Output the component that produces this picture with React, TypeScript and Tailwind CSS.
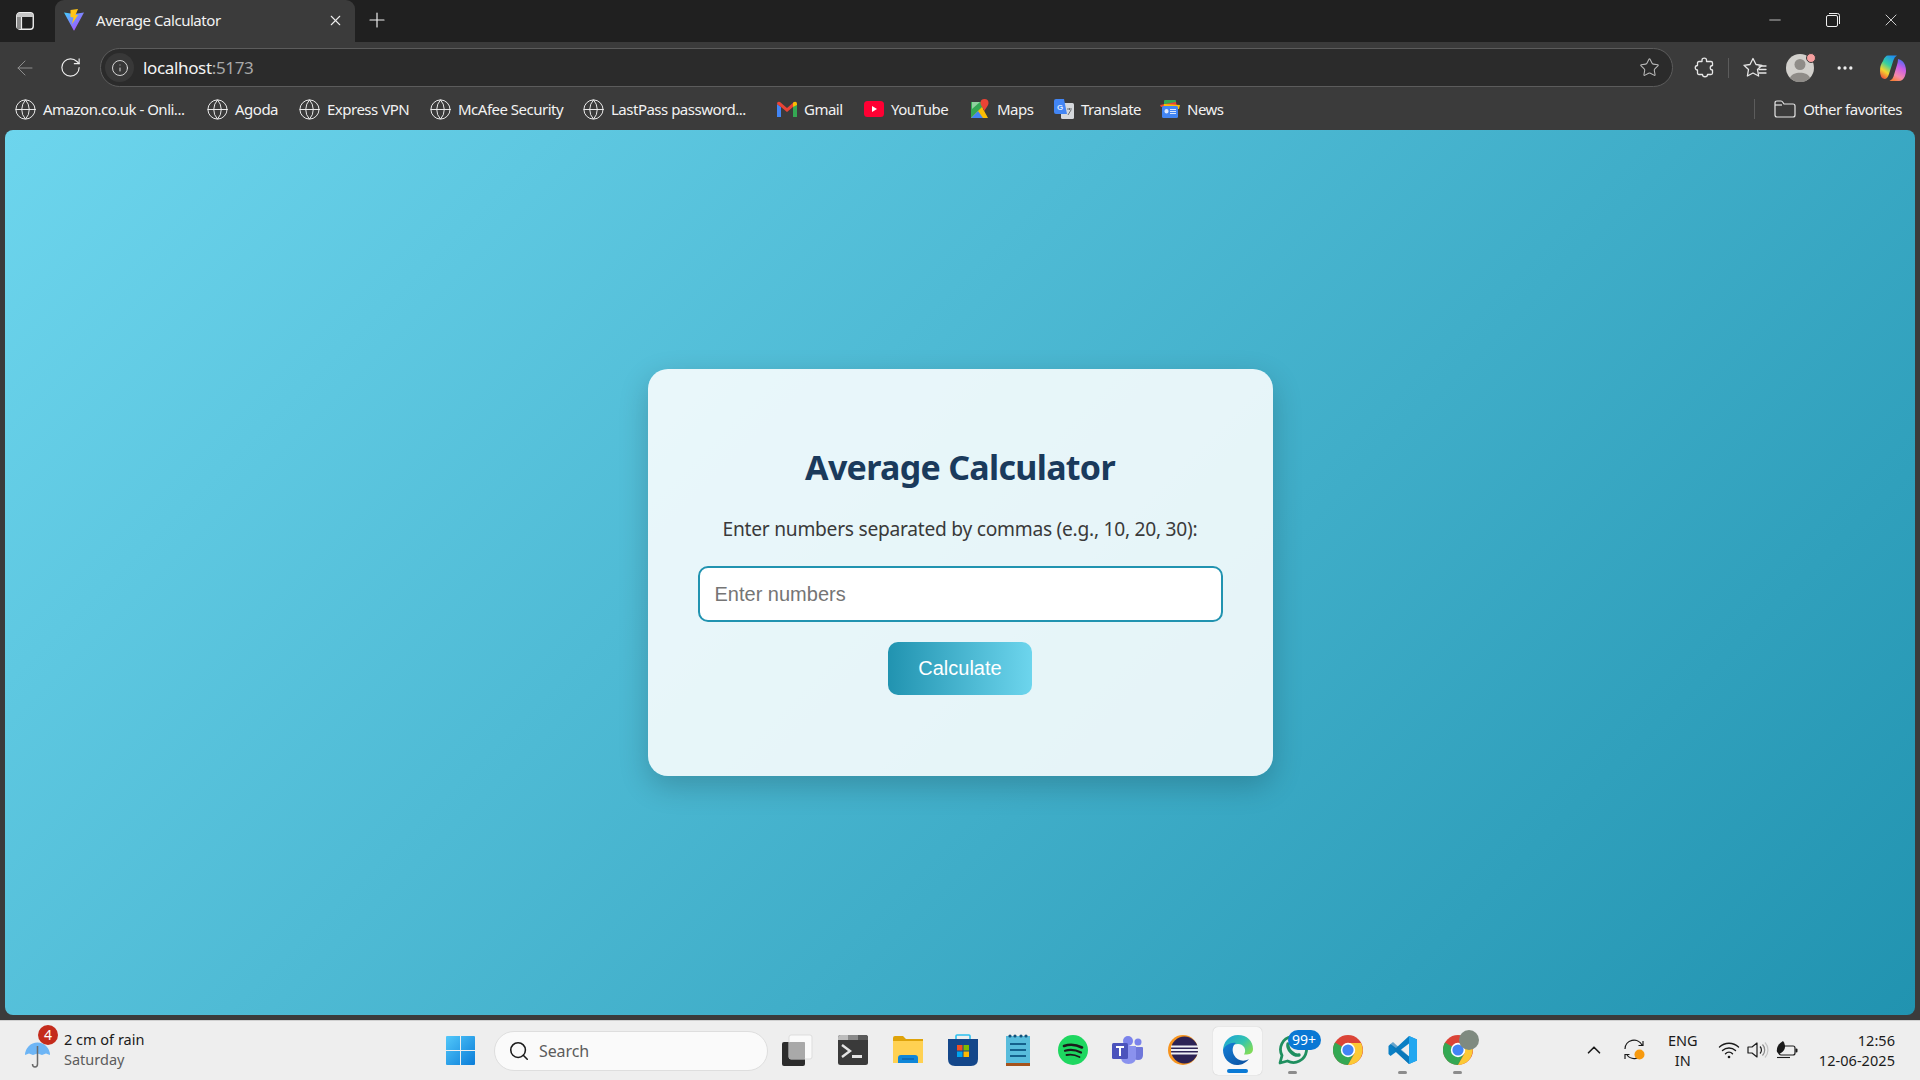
import React from 'react';
import {
  ArrowLeft,
  ChevronUp,
  Ellipsis,
  Globe,
  Info,
  Minus,
  Plus,
  RotateCw,
  Search,
  Star,
  X,
} from 'lucide-react';

// Logos and small product marks
const ViteLogo = () => (
  <svg width="20" height="22" viewBox="0 0 20 22">
    <defs>
      <linearGradient id="viteBody" x1="0" y1="0" x2="1" y2="1">
        <stop offset="0" stopColor="#41d1ff" />
        <stop offset="1" stopColor="#bd34fe" />
      </linearGradient>
    </defs>
    <path d="M0 3.5 L10 5 L20 3.5 L10.5 21 Q10 22 9.5 21 Z" fill="url(#viteBody)" />
    <path d="M6.5 1 L14 0 L11.5 6 L14 6 L8 15 L9.5 8.5 L6.5 8 Z" fill="#ffc517" />
  </svg>
);

const SidebarIcon = () => (
  <svg width="18" height="18" viewBox="0 0 18 18">
    <rect x="0.75" y="0.75" width="16.5" height="16.5" rx="3" fill="none" stroke="#eeeeee" strokeWidth="1.4" />
    <path d="M1 4 Q1 1 4 1 H14 Q17 1 17 4 V5 H1 Z" fill="#c8c8c8" />
    <rect x="1" y="5" width="4.5" height="12" fill="#8a8a8a" />
    <path d="M5.5 5 V17" stroke="#eeeeee" strokeWidth="1.2" />
  </svg>
);

const GmailLogo = () => (
  <svg width="20" height="16" viewBox="0 0 20 16">
    <path d="M0 3 L0 16 L4 16 L4 6 Z" fill="#4285f4" />
    <path d="M20 3 L20 16 L16 16 L16 6 Z" fill="#34a853" />
    <path d="M0 3 Q0 0 3 1 L10 7 L17 1 L16 6 L10 11 L4 6 Z" fill="#ea4335" />
    <path d="M16 1.8 L17 1 Q20 0 20 3 L20 4 L16 6 Z" fill="#fbbc04" />
  </svg>
);

const YoutubeLogo = () => (
  <svg width="20" height="16" viewBox="0 0 20 16">
    <rect width="20" height="16" rx="3.5" fill="#ff0033" />
    <path d="M8 5 L13 8 L8 11 Z" fill="#fff" />
  </svg>
);

const MapsLogo = () => (
  <svg width="18" height="20" viewBox="0 0 18 20">
    <path d="M0 3 H12 V19 H0 Z" fill="#34a853" />
    <path d="M0 19 L11 8 L17 19 Z" fill="#fbbc04" />
    <path d="M0 19 L7 12 L12 19 Z" fill="#4285f4" />
    <path d="M1 3 H9 L1 10 Z" fill="#8fd19e" />
    <path d="M13.5 0 A4 4 0 0 1 17.5 4 C17.5 7 14.5 9 13.5 12 C12.5 9 9.5 7 9.5 4 A4 4 0 0 1 13.5 0 Z" fill="#ea4335" />
  </svg>
);

const TranslateLogo = () => (
  <svg width="20" height="20" viewBox="0 0 20 20">
    <rect x="7" y="4" width="13" height="16" rx="1.5" fill="#d5d8dc" />
    <path d="M13 10 H18 M15.5 9 V11 M14 16 L17 11" stroke="#6a6e73" strokeWidth="1" fill="none" />
    <path d="M2 0 H10 L13 15 H2 Q0 15 0 13 V2 Q0 0 2 0 Z" fill="#4285f4" />
    <text x="6" y="10.5" fontSize="8" fontWeight="700" textAnchor="middle" fill="#dce8fd" fontFamily="Liberation Sans, sans-serif">G</text>
  </svg>
);

const NewsLogo = () => (
  <svg width="20" height="20" viewBox="0 0 20 20">
    <rect x="4" y="1" width="12" height="8" rx="1" fill="#34a853" />
    <path d="M0 6 L16 3 L17 8 H1 Z" fill="#ea4335" />
    <path d="M4 5 L20 6 L19 10 H3 Z" fill="#fbbc04" />
    <rect x="2" y="7" width="16" height="12" rx="1.5" fill="#4285f4" />
    <rect x="4.5" y="10" width="4" height="4.5" rx="2" fill="#dce8fd" />
    <path d="M10 10.5 H16 M10 12.5 H16 M10 14.5 H16" stroke="#dce8fd" strokeWidth="1.2" />
  </svg>
);

const ExtensionIcon = () => (
  <svg width="20" height="21" viewBox="0 0 20 21" fill="none" stroke="#e6e6e6" strokeWidth="1.3" strokeLinejoin="round">
    <path d="M8 3 C8 0.5 12.5 0.5 12.5 3 L12.5 4.5 L17 4.5 Q18.5 4.5 18.5 6 L18.5 8.5 C15.5 8.5 15.5 13 18.5 13 L18.5 16 Q18.5 17.5 17 17.5 L13.5 17.5 C13.5 20.5 8.5 20.5 8.5 17.5 L5 17.5 Q3.5 17.5 3.5 16 L3.5 13 C0.5 13 0.5 8.5 3.5 8.5 L3.5 6 Q3.5 4.5 5 4.5 L8 4.5 Z" />
  </svg>
);

const FavoritesIcon = () => (
  <svg width="26" height="22" viewBox="0 0 26 22" fill="none" stroke="#e6e6e6" strokeWidth="1.3" strokeLinejoin="round">
    <path d="M11 1.5 L14 7.5 L20 8.3 L15.5 12.5 L16.6 19 L11 16 L5.4 19 L6.5 12.5 L2 8.3 L8 7.5 Z" />
    <path d="M17 9 H24 M17 12.5 H24 M17 16 H24" strokeLinecap="round" />
  </svg>
);

const Avatar = () => (
  <div className="relative w-[28px] h-[28px]">
    <svg width="28" height="28" viewBox="0 0 28 28">
      <circle cx="14" cy="14" r="14" fill="#d2d0cc" />
      <circle cx="14" cy="10.5" r="5.5" fill="#8f8c88" />
      <path d="M4 24 C6 17 22 17 24 24 A14 14 0 0 1 4 24 Z" fill="#8f8c88" />
    </svg>
    <span className="absolute -top-[1px] -right-[2px] w-[10px] h-[10px] rounded-full bg-[#f7a0a0] border border-[#3b3b3b]" />
  </div>
);

const CopilotLogo = () => (
  <svg width="28" height="28" viewBox="0 0 28 28">
    <defs>
      <linearGradient id="copA" x1="0.7" y1="0" x2="0.2" y2="1">
        <stop offset="0" stopColor="#1f8ff0" />
        <stop offset="0.4" stopColor="#35d0a0" />
        <stop offset="0.7" stopColor="#f5d52e" />
        <stop offset="1" stopColor="#f0503c" />
      </linearGradient>
      <linearGradient id="copB" x1="0.7" y1="0" x2="0.3" y2="1">
        <stop offset="0" stopColor="#4a6cf0" />
        <stop offset="0.35" stopColor="#c95ce8" />
        <stop offset="0.75" stopColor="#f48aa8" />
        <stop offset="1" stopColor="#f7803c" />
      </linearGradient>
    </defs>
    <path d="M9 1.5 H18 Q15.5 2.5 14.5 6 L10 20 Q8.5 25 5.5 25 Q1 24 1 17 Q1 11 4 7 Q6 1.5 9 1.5 Z" fill="url(#copA)" />
    <path d="M19 5 Q24 6 26 11 Q28 17 26 22 Q24 27 20 27 H10.5 Q13.5 26 14.5 22.5 L18 11 Q19 8 19 5 Z" fill="url(#copB)" />
  </svg>
);

const FolderOutline = () => (
  <svg width="22" height="20" viewBox="0 0 22 20" fill="none" stroke="#e6e6e6" strokeWidth="1.2">
    <path d="M1 4 Q1 2 3 2 H7 Q8 2 9 3.5 L10 5 H19 Q21 5 21 7 V16 Q21 18 19 18 H3 Q1 18 1 16 Z" />
    <path d="M1 6 H8" />
  </svg>
);

const WindowsLogo = () => (
  <svg width="29" height="29" viewBox="0 0 29 29">
    <defs>
      <linearGradient id="winA" x1="0" y1="0" x2="1" y2="1">
        <stop offset="0" stopColor="#52c8fa" />
        <stop offset="1" stopColor="#0a7cd8" />
      </linearGradient>
    </defs>
    <path d="M0 1 Q0 0 1 0 H14 V14 H0 Z M15 0 H28 Q29 0 29 1 V14 H15 Z M0 15 H14 V29 H1 Q0 29 0 28 Z M15 15 H29 V28 Q29 29 28 29 H15 Z" fill="url(#winA)" />
  </svg>
);

const TaskViewIcon = () => (
  <svg width="32" height="32" viewBox="0 0 32 32">
    <rect x="0" y="8" width="23" height="24" rx="2" fill="#2c2c2c" />
    <rect x="7" y="1" width="23" height="24" rx="2" fill="#ffffff" fillOpacity="0.72" stroke="#dddddd" />
    <rect x="7" y="8" width="16" height="17" rx="1" fill="#a9a9a9" />
  </svg>
);

const TerminalIcon = () => (
  <svg width="30" height="30" viewBox="0 0 30 30">
    <rect width="30" height="30" y="0" rx="2.5" fill="#3a3a3a" />
    <path d="M0 2.5 Q0 0 2.5 0 H10 V5 H0 Z" fill="#bdbdbd" />
    <rect x="10" y="0" width="10" height="5" fill="#8a8a8a" />
    <path d="M20 0 H27.5 Q30 0 30 2.5 V5 H20 Z" fill="#5a5a5a" />
    <path d="M4 10 L12 16 L4 22" fill="none" stroke="#e4e4e4" strokeWidth="2.4" />
    <rect x="14" y="20" width="10" height="3" fill="#e4e4e4" />
  </svg>
);

const ExplorerIcon = () => (
  <svg width="30" height="28" viewBox="0 0 30 28">
    <path d="M0 2 Q0 0 2 0 H10 L13 3 H30 V8 H0 Z" fill="#dfa30a" />
    <path d="M0 5 H30 V27 H0 Z" fill="#ffd152" />
    <path d="M5 22 Q5 19 8 19 H22 Q25 19 25 22 V27 H5 Z" fill="#0f86d8" />
    <path d="M9 23 H21" stroke="#0b5ca3" strokeWidth="1.2" />
  </svg>
);

const StoreIcon = () => (
  <svg width="30" height="32" viewBox="0 0 30 32">
    <path d="M8 6 V2 Q8 1 9 1 H21 Q22 1 22 2 V6" fill="none" stroke="#2bc0f0" strokeWidth="1.6" />
    <path d="M0 5 H30 V25 Q30 32 23 32 H7 Q0 32 0 25 Z" fill="#14478a" />
    <rect x="9" y="11" width="5.5" height="5.5" fill="#f25022" />
    <rect x="15.5" y="11" width="5.5" height="5.5" fill="#7fba00" />
    <rect x="9" y="17.5" width="5.5" height="5.5" fill="#00a4ef" />
    <rect x="15.5" y="17.5" width="5.5" height="5.5" fill="#ffb900" />
  </svg>
);

const NotepadIcon = () => (
  <svg width="24" height="32" viewBox="0 0 24 32">
    <rect y="2" width="24" height="27" fill="#58bcdc" />
    <rect y="29" width="24" height="3" fill="#a5531c" />
    <circle cx="4" cy="2" r="1.6" fill="#14527a" />
    <circle cx="9" cy="2" r="1.6" fill="#14527a" />
    <circle cx="15" cy="2" r="1.6" fill="#14527a" />
    <circle cx="20" cy="2" r="1.6" fill="#14527a" />
    <path d="M4 10 H20 M4 16 H20 M4 22 H20" stroke="#14608c" strokeWidth="2" />
  </svg>
);

const SpotifyIcon = () => (
  <svg width="30" height="30" viewBox="0 0 30 30" fill="none" stroke="#1b1b1b" strokeLinecap="round">
    <circle cx="15" cy="15" r="15" fill="#1ed760" stroke="none" />
    <path d="M6 11 Q15 8 24 12.5" strokeWidth="2.6" />
    <path d="M7 15.8 Q15 13.5 23 17.5" strokeWidth="2.2" />
    <path d="M8.5 20 Q15 18.5 21.5 22" strokeWidth="1.8" />
  </svg>
);

const TeamsIcon = () => (
  <svg width="31" height="28" viewBox="0 0 31 28">
    <circle cx="26" cy="6" r="3.5" fill="#7b83eb" />
    <path d="M21 11 H30 Q31 11 31 12 V19 Q31 24 26 24 Q21 24 21 19 Z" fill="#6f77da" />
    <circle cx="16" cy="5" r="5" fill="#7b83eb" />
    <path d="M9 10 H24 V21 Q24 28 16.5 28 Q9 28 9 21 Z" fill="#8a92ee" />
    <rect x="0" y="7" width="16" height="16" rx="1.5" fill="#4b53bc" />
    <path d="M4 11 H12 M8 11 V20" stroke="#fff" strokeWidth="2" />
  </svg>
);

const EclipseIcon = () => (
  <svg width="30" height="30" viewBox="0 0 30 30">
    <circle cx="15" cy="15" r="15" fill="#f7941e" />
    <circle cx="16.5" cy="15" r="13.5" fill="#2c2255" />
    <rect x="3" y="10.5" width="27" height="2" fill="#efeff5" />
    <rect x="3" y="14" width="27" height="2" fill="#efeff5" />
    <rect x="3" y="17.5" width="27" height="2" fill="#efeff5" />
  </svg>
);

const EdgeIcon = () => (
  <svg width="30" height="30" viewBox="0 0 30 30">
    <defs>
      <linearGradient id="edgeTop" x1="0" y1="0" x2="1" y2="0.7">
        <stop offset="0" stopColor="#1a9fdc" />
        <stop offset="0.6" stopColor="#33c4b0" />
        <stop offset="1" stopColor="#7fdb5a" />
      </linearGradient>
      <linearGradient id="edgeLow" x1="0" y1="0" x2="1" y2="1">
        <stop offset="0" stopColor="#1580d8" />
        <stop offset="1" stopColor="#0b4f9e" />
      </linearGradient>
    </defs>
    <path d="M15 0 C24 0 30 6 30 14 C30 19 25 20 21 19.5 C24 15 21 9 15 9 C9 9 3 12 0 16 C0 7 6 0 15 0 Z" fill="url(#edgeTop)" />
    <path d="M0 15 C2 10 8 7 13 8 C9 11 9 16 11 20 C14 26 21 27 26 24 C22 29 17 30 14 30 C6 30 0 23 0 15 Z" fill="url(#edgeLow)" />
  </svg>
);

const WhatsAppIcon = () => (
  <svg width="30" height="30" viewBox="0 0 30 30" fill="none" stroke="#1f8f5f" strokeWidth="2.8">
    <path d="M2 28 L4 20.5 A13 13 0 1 1 9.5 26 Z" strokeLinejoin="round" />
    <path d="M10 9 C9 14 15 21 21 20" strokeWidth="3.4" strokeLinecap="round" />
  </svg>
);

const ChromeIcon = ({ size = 30 }: { size?: number }) => (
  <svg width={size} height={size} viewBox="0 0 30 30">
    <circle cx="15" cy="15" r="15" fill="#db4437" />
    <path d="M15 15 L2 7.5 A15 15 0 0 0 15 30 L21.5 18 Z" fill="#34a853" />
    <path d="M15 8 H28 A15 15 0 0 1 15 30 L21.5 18.5 Z" fill="#fcc934" />
    <circle cx="15" cy="15" r="7.2" fill="#fff" />
    <circle cx="15" cy="15" r="5.6" fill="#4285f4" />
  </svg>
);

const VsCodeIcon = () => (
  <svg width="30" height="30" viewBox="0 0 30 30">
    <path d="M21 1 L29 4.5 V25.5 L21 29 L8 17 L2.5 21 L0.5 19 V11 L2.5 9 L8 13 Z" fill="#0a7fc4" />
    <path d="M21 1 L29 4.5 V25.5 L21 29 Z" fill="#22a7f0" />
    <path d="M21 8.5 L12.5 15 L21 21.5 Z" fill="#eeeeee" />
    <path d="M2.5 9 L5 7 L21 21.5 V29 L8 17 Z" fill="#0a73b5" fillOpacity="0.6" />
  </svg>
);

const UmbrellaIcon = () => (
  <svg width="26" height="26" viewBox="0 0 26 26">
    <path d="M0 13 A12.5 12.5 0 0 1 25 13 L21 11.5 L17 13 L12.5 11.5 L8 13 L4 11.5 Z" fill="#6db5f5" />
    <path d="M12.5 4 V22 Q12.5 25 10 25 Q7.5 25 7.5 22" fill="none" stroke="#6a6a6a" strokeWidth="1.5" />
  </svg>
);

const SyncIcon = () => (
  <svg width="22" height="22" viewBox="0 0 22 22" fill="none" stroke="#1b1b1b" strokeWidth="1.2">
    <path d="M1 10 A9 9 0 0 1 18 6 M19 2 V6.5 H14.5" />
    <path d="M18 15 A9 9 0 0 1 3 16 M1 20 V15.5 H5.5" />
    <circle cx="15.5" cy="15.5" r="5" fill="#f79a0e" stroke="none" />
  </svg>
);

const WifiIcon = () => (
  <svg width="22" height="18" viewBox="0 0 22 18" fill="none" stroke="#1b1b1b" strokeWidth="1.4" strokeLinecap="round">
    <path d="M1.5 6 A14 14 0 0 1 20.5 6" />
    <path d="M4.5 9.5 A9.5 9.5 0 0 1 17.5 9.5" />
    <path d="M7.5 12.7 A5 5 0 0 1 14.5 12.7" />
    <circle cx="11" cy="16" r="1.3" fill="#1b1b1b" stroke="none" />
  </svg>
);

const VolumeIcon = () => (
  <svg width="22" height="18" viewBox="0 0 22 18" fill="none" strokeWidth="1.2">
    <path d="M1 6 H5 L10 2 V16 L5 12 H1 Z" stroke="#1b1b1b" strokeLinejoin="round" />
    <path d="M13 5.5 A5 5 0 0 1 13 12.5" stroke="#1b1b1b" />
    <path d="M15.5 3.5 A8 8 0 0 1 15.5 14.5" stroke="#8a8a8a" />
    <path d="M18 1.5 A11 11 0 0 1 18 16.5" stroke="#c4c4c4" />
  </svg>
);

const BatteryLeafIcon = () => (
  <svg width="22" height="18" viewBox="0 0 22 18">
    <rect x="3" y="5" width="16" height="9" rx="2" fill="none" stroke="#1b1b1b" strokeWidth="1.2" />
    <rect x="19.5" y="7.5" width="2" height="4" rx="1" fill="#1b1b1b" />
    <path d="M1 11 C0 5 4 2 7 0 C10 4 10 9 5 12 L3 13 Z" fill="#1b1b1b" />
    <path d="M1 16.5 H14" stroke="#1b1b1b" strokeWidth="1.1" />
  </svg>
);

const bookmarkFont = "text-[15px] text-[#f2f2f2] whitespace-nowrap tracking-[-0.5px]";

const Bookmark = ({ width, icon, label }: { width: string; icon?: React.ReactNode; label: string }) => (
  <div className={`flex items-center gap-[6px] shrink-0 ${width}`}>
    <span className="w-[23px] flex justify-center shrink-0">
      {icon ?? <Globe size={23} strokeWidth={1} color="#eeeeee" />}
    </span>
    <span className={bookmarkFont}>{label}</span>
  </div>
);

const TaskbarApp = ({ children, dot, active }: { children: React.ReactNode; dot?: boolean; active?: boolean }) => (
  <div className="relative w-[55px] h-full flex items-center justify-center shrink-0">
    {active && (
      <span className="absolute top-[6px] left-[3px] w-[49px] h-[48px] rounded-[5px] bg-[#f8f8f8] shadow-[0_0_1px_rgba(0,0,0,0.25)]" />
    )}
    <span className="relative flex items-center justify-center -mt-[2px]">{children}</span>
    {dot && <span className="absolute bottom-[6px] left-[23px] w-[9px] h-[3px] rounded-full bg-[#8c8c8c]" />}
    {active && <span className="absolute bottom-[7px] left-[17px] w-[21px] h-[4px] rounded-full bg-[#0a7ad6]" />}
  </div>
);

function App() {
  return (
    <div className="w-[1920px] h-[1080px] overflow-hidden flex flex-col bg-[#3b3b3b] font-['Noto_Sans','Liberation_Sans',sans-serif]">
      {/* tab strip */}
      <div className="h-[42px] bg-[#202020] flex items-center shrink-0">
        <div className="w-[50px] flex justify-center shrink-0">
          <SidebarIcon />
        </div>
        <div className="ml-[5px] w-[300px] h-full bg-[#3b3b3b] rounded-t-[9px] flex items-center pl-[9px] pr-[11px] pb-[2px] shrink-0">
          <ViteLogo />
          <span className="ml-[12px] text-[15px] text-[#f2f2f2] tracking-[-0.45px]">Average Calculator</span>
          <X size={17} strokeWidth={1.5} color="#eeeeee" className="ml-auto" />
        </div>
        <Plus size={24} strokeWidth={1.2} color="#eeeeee" className="ml-[10px] mb-[2px]" />
        <div className="ml-auto flex items-center pb-[2px]">
          <div className="w-[58px] flex justify-center"><Minus size={18} strokeWidth={1} color="#eeeeee" /></div>
          <div className="w-[58px] flex justify-center">
            <svg width="14" height="14" viewBox="0 0 14 14" fill="none" stroke="#eeeeee" strokeWidth="1">
              <rect x="0.5" y="2.5" width="11" height="11" rx="1.5" />
              <path d="M3 .5 H11.5 Q13.5 .5 13.5 2.5 V11" />
            </svg>
          </div>
          <div className="w-[58px] flex justify-center"><X size={20} strokeWidth={1} color="#eeeeee" /></div>
        </div>
      </div>

      {/* toolbar */}
      <div className="h-[46px] flex items-center shrink-0 pt-[5px]">
        <div className="w-[50px] flex justify-center shrink-0">
          <ArrowLeft size={24} strokeWidth={1} color="#8e8e8e" />
        </div>
        <div className="w-[40px] flex justify-center shrink-0">
          <RotateCw size={23} strokeWidth={1.2} color="#eeeeee" />
        </div>
        <div className="ml-[10px] w-[1573px] h-[39px] rounded-full bg-[#2b2b2b] border border-[#5c5c5c] flex items-center shrink-0">
          <span className="ml-[4px] w-[29px] h-[29px] rounded-full bg-[#383838] flex items-center justify-center">
            <Info size={18} strokeWidth={1.2} color="#e4e4e4" />
          </span>
          <span className="ml-[9px] text-[17px] text-[#f4f4f4] tracking-[-0.35px]">
            localhost<span className="text-[#a8a8a8]">:5173</span>
          </span>
          <Star size={21} strokeWidth={1.2} color="#b8b8b8" className="ml-auto mr-[12px]" />
        </div>
        <div className="ml-[21px] flex items-center">
          <ExtensionIcon />
          <span className="ml-[14px] w-px h-[20px] bg-[#5c5c5c]" />
          <span className="ml-[13px] flex"><FavoritesIcon /></span>
          <span className="ml-[18px] flex"><Avatar /></span>
          <Ellipsis size={20} strokeWidth={2} color="#eeeeee" className="ml-[21px]" />
          <span className="ml-[24px] flex"><CopilotLogo /></span>
        </div>
      </div>

      {/* favorites bar */}
      <div className="h-[42px] flex items-center pl-[14px] shrink-0">
        <Bookmark width="w-[192px]" label="Amazon.co.uk - Onli..." />
        <Bookmark width="w-[92px]" label="Agoda" />
        <Bookmark width="w-[131px]" label="Express VPN" />
        <Bookmark width="w-[153px]" label="McAfee Security" />
        <Bookmark width="w-[193px]" label="LastPass password..." />
        <Bookmark width="w-[87px]" icon={<GmailLogo />} label="Gmail" />
        <Bookmark width="w-[106px]" icon={<YoutubeLogo />} label="YouTube" />
        <Bookmark width="w-[84px]" icon={<MapsLogo />} label="Maps" />
        <Bookmark width="w-[106px]" icon={<TranslateLogo />} label="Translate" />
        <Bookmark width="w-[80px]" icon={<NewsLogo />} label="News" />
        <div className="ml-auto flex items-center pr-[18px]">
          <span className="w-px h-[20px] bg-[#5c5c5c]" />
          <span className="ml-[19px] flex"><FolderOutline /></span>
          <span className={`ml-[7px] ${bookmarkFont}`}>Other favorites</span>
        </div>
      </div>

      {/* page */}
      <div className="h-[885px] mx-[5px] rounded-[8px] overflow-hidden bg-[linear-gradient(135deg,#6dd5ed,#2193b0)] flex items-center justify-center shrink-0">
        <div className="w-[625px] h-[407px] rounded-[20px] bg-white/[0.87] shadow-[0_10px_30px_rgba(0,0,0,0.2)] px-[50px] pt-[77px] flex flex-col items-center">
          <h1 className="text-[34px] leading-[42px] font-bold text-[#1a3a5c] tracking-[-0.7px]">Average Calculator</h1>
          <p className="mt-[28px] text-[19.2px] leading-[26px] text-[#3a3a3a] tracking-[-0.26px]">
            Enter numbers separated by commas (e.g., 10, 20, 30):
          </p>
          <input
            readOnly
            placeholder="Enter numbers"
            className="mt-[24px] w-[525px] h-[56px] rounded-[10px] border-2 border-[#2193b0] bg-white px-[15px] text-[20px] [font-family:'Liberation_Sans',sans-serif] outline-none placeholder:text-[#757575]"
          />
          <button className="mt-[20px] w-[144px] h-[53px] pb-[2px] rounded-[10px] bg-[linear-gradient(90deg,#2193b0,#6dd5ed)] text-white text-[20px] [font-family:'Liberation_Sans',sans-serif]">
            Calculate
          </button>
        </div>
      </div>

      {/* taskbar */}
      <div className="mt-[5px] h-[60px] bg-[#eeeeee] border-t border-[#d0d0d0] flex items-center shrink-0">
        <div className="w-[433px] h-full flex items-center pl-[24px] pb-[4px] shrink-0">
          <div className="relative w-[40px] h-[30px] shrink-0 mt-[4px]">
            <span className="absolute top-[6px] left-[1px] flex"><UmbrellaIcon /></span>
            <span className="absolute -top-[11px] left-[14px] w-[20px] h-[20px] rounded-full bg-[#c42b1c] text-white text-[14px] leading-[20px] text-center">4</span>
          </div>
          <div className="flex flex-col text-[14.5px] leading-[20px]">
            <span className="text-[#1b1b1b]">2 cm of rain</span>
            <span className="text-[#5c5c5c]">Saturday</span>
          </div>
        </div>
        <div className="w-[55px] flex justify-center shrink-0"><WindowsLogo /></div>
        <div className="ml-[6px] w-[274px] h-[40px] rounded-full bg-[#fafafa] border border-[#dedede] flex items-center pl-[13px] shrink-0">
          <Search size={22} strokeWidth={1.7} color="#1b1b1b" />
          <span className="ml-[9px] text-[16px] text-[#5c5c5c] tracking-[-0.1px]">Search</span>
        </div>
        <div className="ml-[2px] h-full flex shrink-0">
          <TaskbarApp><TaskViewIcon /></TaskbarApp>
          <TaskbarApp><TerminalIcon /></TaskbarApp>
          <TaskbarApp><ExplorerIcon /></TaskbarApp>
          <TaskbarApp><StoreIcon /></TaskbarApp>
          <TaskbarApp><NotepadIcon /></TaskbarApp>
          <TaskbarApp><SpotifyIcon /></TaskbarApp>
          <TaskbarApp><TeamsIcon /></TaskbarApp>
          <TaskbarApp><EclipseIcon /></TaskbarApp>
          <TaskbarApp active><EdgeIcon /></TaskbarApp>
          <TaskbarApp dot>
            <WhatsAppIcon />
            <span className="absolute -top-[5px] left-[10px] w-[33px] h-[20px] rounded-full bg-[#0a78d4] text-white text-[14px] leading-[20px] text-center">99+</span>
          </TaskbarApp>
          <TaskbarApp><ChromeIcon /></TaskbarApp>
          <TaskbarApp dot><VsCodeIcon /></TaskbarApp>
          <TaskbarApp dot>
            <ChromeIcon />
            <span className="absolute -top-[5px] left-[16px] w-[20px] h-[20px] rounded-full bg-[#7f8a80]" />
          </TaskbarApp>
        </div>
        <div className="ml-auto h-full flex items-center pr-[25px] pb-[2px] text-[#1b1b1b]">
          <ChevronUp size={22} strokeWidth={1.8} />
          <span className="ml-[19px] flex"><SyncIcon /></span>
          <div className="ml-[15px] w-[44px] flex flex-col items-center text-[14.5px] leading-[20px]">
            <span>ENG</span>
            <span>IN</span>
          </div>
          <span className="ml-[13px] flex"><WifiIcon /></span>
          <span className="ml-[7px] flex"><VolumeIcon /></span>
          <span className="ml-[7px] flex"><BatteryLeafIcon /></span>
          <div className="ml-[21px] flex flex-col items-end text-[14.5px] leading-[20px] tracking-[0.05px]">
            <span>12:56</span>
            <span>12-06-2025</span>
          </div>
        </div>
      </div>
    </div>
  );
}

export default App;
